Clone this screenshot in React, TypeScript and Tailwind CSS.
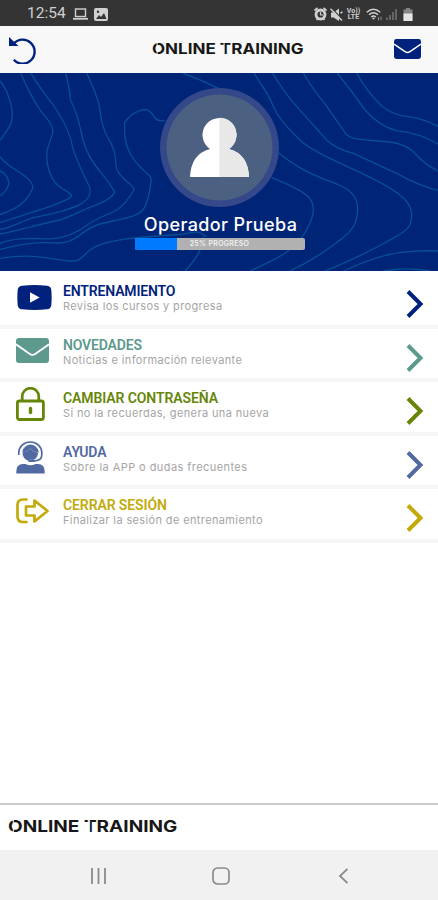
import React from 'react';
import clsx from 'clsx';

interface IMenuItem {
  title: string;
  description: string;
  color: string;
  titleSpacing: string;
  descriptionSpacing: string;
  icon: React.ReactNode;
}

const MENU: IMenuItem[] = [
  {
    title: 'ENTRENAMIENTO',
    description: 'Revisa los cursos y progresa',
    color: 'text-[#00227c]',
    titleSpacing: 'tracking-[-0.15px]',
    descriptionSpacing: 'tracking-[0.37px]',
    icon: <PlayIcon />,
  },
  {
    title: 'NOVEDADES',
    description: 'Noticias e información relevante',
    color: 'text-[#5d998d]',
    titleSpacing: 'tracking-[-0.15px]',
    descriptionSpacing: 'tracking-[0.37px]',
    icon: <MailIcon className="h-[25px] w-[33px]" />,
  },
  {
    title: 'CAMBIAR CONTRASEÑA',
    description: 'Si no la recuerdas, genera una nueva',
    color: 'text-[#668607]',
    titleSpacing: 'tracking-[-0.1px]',
    descriptionSpacing: 'tracking-[0.37px]',
    icon: <LockIcon />,
  },
  {
    title: 'AYUDA',
    description: 'Sobre la APP o dudas frecuentes',
    color: 'text-[#526aa2]',
    titleSpacing: 'tracking-[-0.1px]',
    descriptionSpacing: 'tracking-[0.43px]',
    icon: <SupportIcon />,
  },
  {
    title: 'CERRAR SESIÓN',
    description: 'Finalizar la sesión de entrenamiento',
    color: 'text-[#c2aa09]',
    titleSpacing: 'tracking-[-0.1px]',
    descriptionSpacing: 'tracking-[0.37px]',
    icon: <ExitIcon />,
  },
];

function PlayIcon() {
  return (
    <svg viewBox="0 0 35 25" className="ml-px h-[25px] w-[35px]">
      <path d="M5 .7Q17.500-.5 30 .7 34 1 34.300 5q.7 7.500 0 15-.3 4-4.300 4.300-12.500 1.200-25 0-4-.3-4.300-4.300-.7-7.500 0-15Q1 1 5 .7Z" fill="currentColor" />
      <path d="M13 7.200v10.600l9.700-5.300Z" fill="#fff" />
    </svg>
  );
}

function MailIcon({ className }: { className?: string }) {
  return (
    <svg viewBox="0 0 33 25" preserveAspectRatio="none" className={className}>
      <rect width="33" height="25" rx="3" fill="currentColor" />
      <path d="M0 6.300 13.500 15.800q3 2.200 6 0L33 6.300" fill="none" stroke="#fff" strokeWidth="1.800" />
    </svg>
  );
}

function LockIcon() {
  return (
    <svg viewBox="0 0 29 34" className="h-[34px] w-[29px]" fill="none" stroke="currentColor" strokeWidth="2.800">
      <rect x="1.400" y="14" width="26" height="18.500" rx="2" />
      <path d="M6.200 14V9.500a8.300 8.300 0 0 1 16.600 0V14" />
      <path d="M14.500 21.500v4" strokeWidth="3.400" strokeLinecap="round" />
    </svg>
  );
}

function SupportIcon() {
  return (
    <svg viewBox="0 0 29 33" className="h-[33px] w-[29px]">
      <path d="M.3 32.500v-2Q.3 23 7 23h2.500q5 2.500 10 0H22q6.700 0 6.700 7.500v2Z" fill="currentColor" />
      <path d="M6.500 11.500q5-.5 7.500-4 3.500 3.500 8 4.500a7.600 7.600 0 0 1-5 7 3 2 0 0 0-4.500.8 8 8 0 0 1-6-8.300Z" fill="currentColor" />
      <path d="M6.500 10a8.200 8.200 0 0 1 16 0v2Q17.500 11 14 7.500 11.500 11 6.500 11.500Z" fill="currentColor" />
      <path d="M2.800 14v-2.500a11.500 10.500 0 0 1 23 0V14q0 5.300-7 5.800h-3" fill="none" stroke="currentColor" strokeWidth="1.700" />
      <path d="M13.500 19.800h3.500" stroke="currentColor" strokeWidth="2.600" strokeLinecap="round" />
    </svg>
  );
}

function ExitIcon() {
  return (
    <svg viewBox="0 0 33 26" className="h-[26px] w-[33px]" fill="none" stroke="currentColor" strokeWidth="2.700" strokeLinejoin="round" strokeLinecap="round">
      <path d="M10.500 1.500H7Q1.500 1.500 1.500 7v11.500Q1.500 24 7 24h3.500" />
      <path d="M10 8.500h8.500V2.500L31.500 13 18.500 23.500v-6H10Z" />
    </svg>
  );
}

function StatusBar() {
  return (
    <header className="flex h-[26px] shrink-0 items-center justify-between bg-[#343434] pt-[2px] pr-[25px] pl-[27px] text-[#d0d0d0]">
      <div className="flex items-center">
        <span className="w-[46px] font-['Roboto',sans-serif] text-[15.5px] leading-none whitespace-nowrap">12:54</span>
        <svg viewBox="0 0 15 12" className="h-[12px] w-[15px]" fill="none" stroke="currentColor">
          <rect x="2.500" y="1" width="10" height="7.500" strokeWidth="1.400" />
          <path d="M0 10.800h15" strokeWidth="1.800" />
        </svg>
        <svg viewBox="0 0 14 13" className="ml-[6px] h-[13px] w-[14px]">
          <rect width="14" height="13" rx="2" fill="currentColor" />
          <path d="m2 11 3-4 2 2 3-4 2.500 6Z" fill="#343434" />
          <circle cx="4" cy="3.700" r="1.200" fill="#343434" />
        </svg>
      </div>
      <div className="flex items-center">
        <svg viewBox="0 0 13 14" className="h-[14px] w-[13px]" fill="none" stroke="currentColor">
          <circle cx="6.500" cy="7.500" r="4.500" strokeWidth="2.800" />
          <path d="M.5 3.500 3.500 1M12.500 3.500 9.500 1M2.500 13l1.500-1.500M10.500 13 9 11.500" strokeWidth="1.700" />
          <path d="M6.500 5v3H9" strokeWidth="1.200" />
        </svg>
        <svg viewBox="0 0 13 13" className="ml-[3px] h-[13px] w-[13px]">
          <path d="M1 4.500h2.500L9 .5v12.500L3.500 9.500H1Z" fill="currentColor" />
          <path d="m1 0 11 11" stroke="#343434" strokeWidth="1.600" />
          <path d="m.5 .8 11.500 11.700M10.500 5l2-1" stroke="currentColor" strokeWidth="1.500" />
        </svg>
        <span className="ml-[4px] flex w-[13px] flex-col items-center font-['Roboto',sans-serif] text-[7px] leading-[6.5px] font-bold">
          <span>Vo))</span>
          <span>LTE</span>
        </span>
        <svg viewBox="0 0 17 13" className="ml-[6px] h-[13px] w-[17px]" fill="none" stroke="currentColor" strokeWidth="1.500">
          <path d="M.8 4.200q6.700-5.800 13.400 0M3 6.700q4.500-3.800 9 0M5.200 9q2.300-1.900 4.600 0" />
          <path d="m5.800 9.800 1.700 1.900 1.700-1.900Z" fill="currentColor" stroke="none" />
          <path d="M12.500 9v3.500M15 8.500V12" strokeWidth="1" opacity=".6" />
        </svg>
        <svg viewBox="0 0 12 12" className="ml-[3px] h-[12px] w-[12px] text-[#666]" fill="none" stroke="currentColor" strokeWidth="2">
          <path d="M1 12V9.500M4 12V7M7 12V4M10 12V1" />
        </svg>
        <svg viewBox="0 0 10 13" className="ml-[5px] h-[13px] w-[10px]">
          <path d="M3 0h4v1.500h2.500V13H.5V1.500H3Z" fill="#858585" />
          <path d="M.5 5.500h9V13h-9Z" fill="#e4e4e4" />
        </svg>
      </div>
    </header>
  );
}

const SLIT = 'relative before:absolute before:inset-y-0 before:w-[1.2px] before:bg-white/85';

function Wordmark({ className }: { className?: string }) {
  return (
    <span className={clsx("inline-block origin-left font-['Inter',sans-serif] font-bold whitespace-nowrap text-[#171717]", className)}>
      <span className={clsx(SLIT, 'before:left-[32%]')}>O</span>NLINE <span className={clsx(SLIT, 'before:left-[34%]')}>T</span>RAINING
    </span>
  );
}

function TopBar() {
  return (
    <div className="flex h-[47px] shrink-0 items-center bg-[#f8f8f8] pr-[17px] pl-[8px] text-[#00227c]">
      <svg viewBox="0 0 29 28" className="h-[28px] w-[29px]" fill="none" stroke="currentColor">
        <path d="M5.800 7.500A12 12 0 1 1 5.800 23.800" strokeWidth="2.400" />
        <path d="M1 1v9h9.500Z" fill="currentColor" stroke="none" />
      </svg>
      <Wordmark className="-mt-[2px] ml-[115px] scale-x-[1.135] text-[15px] leading-none" />
      <MailIcon className="-mt-px ml-auto h-[20px] w-[27px]" />
    </div>
  );
}

function Contours() {
  return (
    <svg viewBox="0 9 1314 594" className="absolute inset-0 h-full w-full" fill="none" stroke="#074f96" strokeWidth="4">
      <path d="M0 32Q22 60 32 100 43 140 30 168L0 212" />
      <path d="M0 260C18 285 45 297 70 315S100 345 98 355C90 375 80 390 60 405S25 425 0 434" />
      <path d="M0 302Q24 315 27 340 20 365 0 378" />
      <path d="M62 9Q90 75 122 123C145 150 156 162 159 182 158 200 143 226 141 245 138 290 148 315 165 337S212 365 215 378C212 388 180 397 140 413L0 458" />
      <path d="M92 9Q130 70 160 105C190 150 212 190 217 230 230 275 252 315 268 350 275 375 265 387 245 400S170 430 115 440 50 470 0 478" />
      <path d="M197 9C205 45 210 60 211 90 230 125 236 150 242 180 250 225 265 258 285 285S335 345 344 367C335 385 310 397 275 410S205 445 165 453 60 480 0 492" />
      <path d="M260 9C280 55 297 85 300 120S310 180 325 205 347 250 347 275 355 310 370 325 400 345 402 360C390 380 375 405 350 420S295 440 265 463 200 503 160 506 60 497 0 520" />
      <path d="M494 152Q470 155 462 140 450 118 432 118C400 125 385 140 374 158 372 205 378 225 390 250S415 285 430 300 455 315 453 335 448 385 432 415 340 450 300 462 245 495 220 508 180 520 140 518 50 525 0 538" />
      <path d="M0 565Q60 555 110 560C160 565 185 573 215 573S250 555 270 540 320 515 370 508 440 500 520 495 580 475 620 500" />
      <path d="M548 9Q600 28 655 55" />
      <path d="M610 500Q610 545 555 603" />
      <path d="M762 9C785 50 800 60 818 105S870 180 900 210 1000 270 1085 310 1233 385 1235 430 1215 485 1170 510 1060 570 975 603" />
      <path d="M818 9Q850 65 895 115L980 210Q1010 238 1060 250L1190 310Q1250 345 1314 361" />
      <path d="M910 9Q940 60 970 95L1030 180Q1040 205 1080 208L1170 216Q1220 222 1250 255 1275 285 1314 302" />
      <path d="M1012 9Q1060 70 1095 120 1140 170 1190 182 1260 190 1314 222" />
      <path d="M1070 9Q1100 65 1145 108 1180 136 1225 140 1275 148 1314 169" />
      <path d="M835 248C900 300 950 320 1000 338S1075 380 1073 420 1060 480 1020 510 940 570 870 603" />
      <path d="M815 323Q860 340 900 362C930 380 940 395 940 420S915 500 880 530 820 570 750 603" />
      <path d="M1032 603Q1110 565 1180 551 1240 540 1314 543" />
      <path d="M1150 603Q1220 590 1290 603" />
    </svg>
  );
}

function Profile() {
  return (
    <section className="relative h-[198px] shrink-0 bg-[#002476]">
      <Contours />
      <div className="relative flex flex-col items-center pt-[15px] pl-px">
        <svg viewBox="0 0 119 119" className="h-[119px] w-[119px]">
          <circle cx="59.500" cy="59.500" r="59.500" fill="#34488a" />
          <circle cx="59.500" cy="59.500" r="53" fill="#4c6082" />
          <path d="M30 89Q31 66 50 61A17 17 0 1 1 69 61Q88 66 89 89Z" fill="#fff" />
          <path d="M59.500 29.800A17 17 0 0 1 69 61Q88 66 89 89H59.500Z" fill="#e8e8e8" />
        </svg>
        <h1 className="mt-[6px] ml-[2px] font-['Inter',sans-serif] text-[18px] leading-[23px] font-medium tracking-[0.38px] whitespace-nowrap text-white">Operador Prueba</h1>
        <div className="relative mt-[2px] h-[12px] w-[170px] overflow-hidden rounded-[2px] bg-[#b1b1b1]">
          <div className="h-full w-1/4 bg-[#007bff]" />
          <span className="absolute inset-0 text-center font-['Inter',sans-serif] text-[7px] leading-[12px] font-semibold tracking-[0.3px] text-[#f0f0f0]">25% PROGRESO</span>
        </div>
      </div>
    </section>
  );
}

function MenuRow({ item }: { item: IMenuItem }) {
  return (
    <li className={clsx('flex h-[53.5px] border-b-4 border-[#f6f6f6] pl-[16px]', item.color)}>
      <div className="flex h-[44px] w-[47px] shrink-0 items-center">{item.icon}</div>
      <div className="flex-1 pt-[8px]">
        <h2 className={clsx("font-['Roboto',sans-serif] text-[14px] leading-[17px] font-semibold whitespace-nowrap", item.titleSpacing)}>{item.title}</h2>
        <p className={clsx("-mt-px font-['Inter',sans-serif] text-[11px] leading-[14px] whitespace-nowrap text-[#a5a5a5]", item.descriptionSpacing)}>{item.description}</p>
      </div>
      <svg viewBox="0 0 18 30" className="mt-[14px] mr-[14px] h-[30px] w-[18px]" fill="none" stroke="currentColor" strokeWidth="4">
        <path d="m2 2.500 12.500 12.500L2 27.500" />
      </svg>
    </li>
  );
}

function NavigationBar() {
  return (
    <nav className="flex h-[50px] shrink-0 items-center justify-between bg-[#f1f1f1] pt-[2px] pr-[89px] pl-[90px] text-[#8a8a8a]">
      <svg viewBox="0 0 17 16" className="h-[16px] w-[17px]" fill="none" stroke="currentColor" strokeWidth="1.800">
        <path d="M2 0v16M8.500 0v16M15 0v16" />
      </svg>
      <svg viewBox="0 0 18 18" className="mr-[3px] h-[18px] w-[18px]" fill="none" stroke="currentColor" strokeWidth="1.700">
        <rect x="1" y="1" width="16" height="16" rx="4.500" />
      </svg>
      <svg viewBox="0 0 11 16" className="h-[16px] w-[11px]" fill="none" stroke="currentColor" strokeWidth="1.800">
        <path d="M9.500.8 2 8l7.500 7.200" />
      </svg>
    </nav>
  );
}

function App() {
  return (
    <div className="flex h-[900px] w-[438px] flex-col overflow-hidden bg-white">
      <StatusBar />
      <TopBar />
      <Profile />
      <ul className="flex-1 pt-[4px]">
        {MENU.map((item) => (
          <MenuRow key={item.title} item={item} />
        ))}
      </ul>
      <footer className="flex h-[47px] shrink-0 items-center border-t-2 border-[#cbcbcb] pb-[3px] pl-[8px]">
        <Wordmark className="scale-x-[1.19] text-[16px] leading-none" />
      </footer>
      <NavigationBar />
    </div>
  );
}

export default App;
